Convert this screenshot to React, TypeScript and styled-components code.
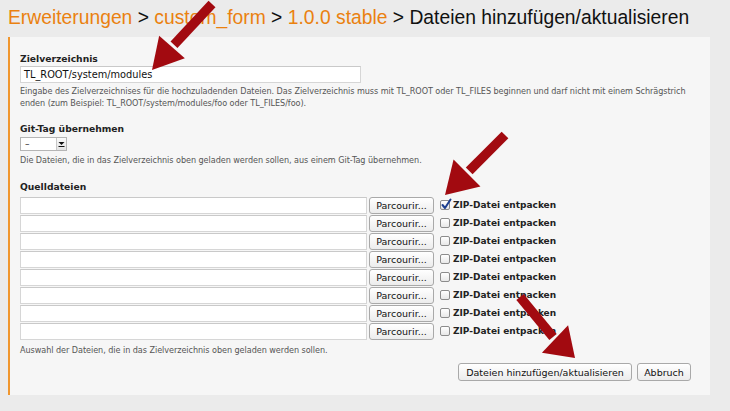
import React from 'react';
import styled, { createGlobalStyle } from 'styled-components';

const Global = createGlobalStyle`
  html, body { margin: 0; padding: 0; background: #ebebeb; }
  body { width: 730px; height: 411px; overflow: hidden; font-family: "DejaVu Sans", "Liberation Sans", sans-serif; color: #333; }
  * { box-sizing: border-box; }
`;

const Page = styled.div`
  position: relative;
  width: 730px;
  height: 411px;
  padding: 0 20px 0 8px;
`;

const Crumbs = styled.h1`
  margin: 0;
  height: 37px;
  font: 400 19.3px/36px "Liberation Sans", Arial, sans-serif;
  color: #111;
  white-space: nowrap;
`;

const Crumb = styled.span`
  color: #ea8110;
`;

const Panel = styled.div`
  background: #f6f6f6;
  border-left: 2px solid #f0962e;
  height: 358px;
  padding: 15px 19px 0 10px;
  display: flex;
  flex-direction: column;
`;

const Field = styled.section<{ $gap: number }>`
  display: flex;
  flex-direction: column;
  margin-bottom: ${(p) => p.$gap}px;
`;

const Label = styled.label`
  font-weight: 700;
  font-size: 9.2px;
  line-height: 14px;
  height: 14px;
  color: #222;
`;

const TextInput = styled.div<{ $w: number }>`
  width: ${(p) => p.$w}px;
  height: 17px;
  background: #fff;
  border: 1px solid #d6d6d6;
  border-top-color: #c9c9c9;
  font-size: 9.8px;
  line-height: 15px;
  padding-left: 3px;
  color: #111;
`;

const Help = styled.p<{ $top: number }>`
  margin: ${(p) => p.$top}px -12px 0 0;
  font-size: 8.1px;
  letter-spacing: -0.05px;
  line-height: 12px;
  color: #555;
`;

const Select = styled.div`
  margin-top: 1px;
  width: 47px;
  height: 14px;
  background: #fff;
  border: 1px solid #b5b5b5;
  display: flex;
  align-items: center;
  font-size: 9px;
  color: #222;
`;

const SelectValue = styled.span`
  flex: 1;
  padding-left: 4px;
  line-height: 12px;
`;

const SelectArrow = styled.span`
  width: 10px;
  height: 12px;
  border-left: 1px solid #c8c8c8;
  background: linear-gradient(#fafafa, #e4e4e4);
  display: flex;
  align-items: center;
  justify-content: center;
`;

const FileList = styled.div`
  margin-top: 2px;
  display: flex;
  flex-direction: column;
`;

const FileRow = styled.div`
  height: 18px;
  display: flex;
  align-items: center;
`;

const Button = styled.button<{ $w: number; $h?: number }>`
  width: ${(p) => p.$w}px;
  height: ${(p) => p.$h ?? 17}px;
  margin: 0;
  padding: 0;
  border: 1px solid #a9a9a9;
  border-radius: 3px;
  background: linear-gradient(#ffffff, #ececec);
  font-family: "DejaVu Sans", sans-serif;
  font-size: 9.5px;
  line-height: 15px;
  color: #111;
  text-align: center;
  white-space: nowrap;
`;

const BrowseButton = styled(Button)`
  margin-left: 2px;
`;

const Check = styled.span`
  position: relative;
  width: 10px;
  height: 10px;
  margin-left: 6px;
  border: 1px solid #8c8c8c;
  border-radius: 2px;
  background: linear-gradient(#ffffff, #e8e8e8);
  flex: none;
`;

const CheckMark = styled.svg`
  position: absolute;
  left: 0px;
  top: -3px;
  width: 11px;
  height: 12px;
`;

const CheckLabel = styled.span`
  margin-left: 3px;
  font-weight: 700;
  font-size: 9px;
  color: #222;
  white-space: nowrap;
`;

const Actions = styled.div`
  margin-top: 7px;
  display: flex;
  justify-content: flex-end;
  gap: 5px;
`;

const Overlay = styled.svg`
  position: absolute;
  left: 0;
  top: 0;
  width: 730px;
  height: 411px;
  pointer-events: none;
`;

const RED = '#a20a10';

function Arrow({ from, base, tip, half }: { from: [number, number]; base: [number, number]; tip: [number, number]; half: number }) {
  const dx = tip[0] - base[0];
  const dy = tip[1] - base[1];
  const len = Math.hypot(dx, dy);
  const px = (-dy / len) * half;
  const py = (dx / len) * half;
  return (
    <g>
      <line x1={from[0]} y1={from[1]} x2={base[0] - dx * 0.1} y2={base[1] - dy * 0.1} stroke={RED} strokeWidth={9.5} />
      <polygon
        points={`${tip[0]},${tip[1]} ${base[0] + px},${base[1] + py} ${base[0] - px},${base[1] - py}`}
        fill={RED}
      />
    </g>
  );
}

export default function App() {
  const rows = Array.from({ length: 8 }, (_, i) => i);
  return (
    <>
      <Global />
      <Page>
        <Crumbs>
          <Crumb>Erweiterungen</Crumb> &gt; <Crumb>custom_form</Crumb> &gt; <Crumb>1.0.0 stable</Crumb> &gt; Dateien hinzufügen/aktualisieren
        </Crumbs>
        <Panel>
          <Field $gap={13}>
            <Label>Zielverzeichnis</Label>
            <TextInput $w={341}>TL_ROOT/system/modules</TextInput>
            <Help $top={2}>
              Eingabe des Zielverzeichnises für die hochzuladenden Dateien. Das Zielverzeichnis muss mit TL_ROOT oder TL_FILES beginnen und darf nicht mit einem Schrägstrich enden (zum Beispiel: TL_ROOT/system/modules/foo oder TL_FILES/foo).
            </Help>
          </Field>
          <Field $gap={14}>
            <Label>Git-Tag übernehmen</Label>
            <Select>
              <SelectValue>–</SelectValue>
              <SelectArrow>
                <svg width="7" height="6" viewBox="0 0 7 6">
                  <path d="M0.5 1 L6.5 1 L3.5 4 Z" fill="#111" />
                  <rect x="0.5" y="5" width="6" height="1" fill="#111" />
                </svg>
              </SelectArrow>
            </Select>
            <Help $top={3}>Die Dateien, die in das Zielverzeichnis oben geladen werden sollen, aus einem Git-Tag übernehmen.</Help>
          </Field>
          <Field $gap={0}>
            <Label>Quelldateien</Label>
            <FileList>
              {rows.map((i) => (
                <FileRow key={i}>
                  <TextInput $w={347} />
                  <BrowseButton $w={65}>Parcourir...</BrowseButton>
                  <Check>
                    {i === 0 && (
                      <CheckMark viewBox="0 0 11 12">
                        <path d="M1.5 7 L4 10 L9.5 1.5" fill="none" stroke="#1d3f8f" strokeWidth={2} strokeLinecap="round" strokeLinejoin="round" />
                      </CheckMark>
                    )}
                  </Check>
                  <CheckLabel>ZIP-Datei entpacken</CheckLabel>
                </FileRow>
              ))}
            </FileList>
            <Help $top={4}>Auswahl der Dateien, die in das Zielverzeichnis oben geladen werden sollen.</Help>
          </Field>
          <Actions>
            <Button $w={174} $h={18}>Dateien hinzufügen/aktualisieren</Button>
            <Button $w={54} $h={18}>Abbruch</Button>
          </Actions>
        </Panel>
        <Overlay viewBox="0 0 730 411">
          <Arrow from={[212, 4]} base={[172, 47]} tip={[152, 70]} half={17} />
          <Arrow from={[505, 135]} base={[467, 173]} tip={[445, 195]} half={19} />
          <Arrow from={[520, 297]} base={[555, 339]} tip={[575, 358]} half={19} />
        </Overlay>
      </Page>
    </>
  );
}
